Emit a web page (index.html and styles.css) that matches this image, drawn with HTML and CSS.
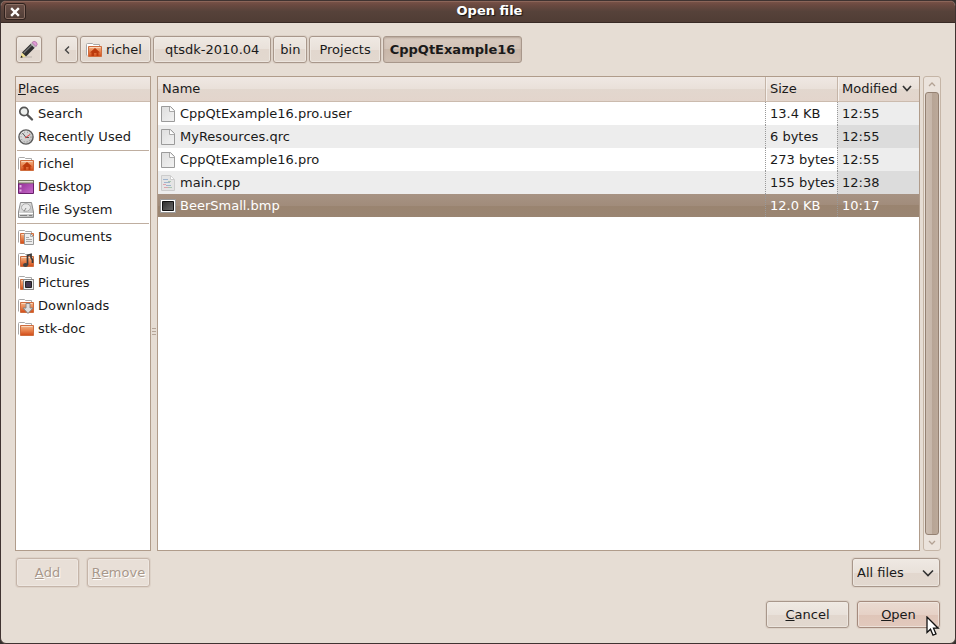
FILE: index.html
```html
<!DOCTYPE html>
<html lang="en">
<head>
<meta charset="utf-8">
<title>Open file</title>
<link rel="stylesheet" href="styles.css">
</head>
<body>
<svg class="defs" width="0" height="0" aria-hidden="true">
  <defs>
    <linearGradient id="orange" x1="0" y1="0" x2="0" y2="1"><stop offset="0" stop-color="#f3b98d"/><stop offset=".5" stop-color="#e8824d"/><stop offset="1" stop-color="#d14a17"/></linearGradient>
    <linearGradient id="paper" x1="0" y1="0" x2="1" y2="1"><stop offset="0" stop-color="#dedede"/><stop offset="1" stop-color="#f2f2f2"/></linearGradient>
    <linearGradient id="purple" x1="0" y1="0" x2="1" y2="1"><stop offset="0" stop-color="#8c278f"/><stop offset="1" stop-color="#c86ccb"/></linearGradient>
    <linearGradient id="dark" x1="0" y1="0" x2="1" y2="1"><stop offset="0" stop-color="#2c2c2c"/><stop offset="1" stop-color="#6a6a6a"/></linearGradient>
    <linearGradient id="metal" x1="0" y1="0" x2="1" y2="1"><stop offset="0" stop-color="#ececec"/><stop offset="1" stop-color="#b9b9b9"/></linearGradient>
    <symbol id="folder" viewBox="0 0 16 16">
      <path d="M.5 13.500V2.500Q.5 1.500 1.500 1.500H6.500L7.500 2.500H13.500V4.500" fill="#fff" stroke="#a9a9a9"/>
      <path d="M2.500 4.500H15.500V14.500H2.500Z" fill="url(#orange)" stroke="#cf6d3e"/>
      <path d="M3.500 5.500H14.500" stroke="#f9d6bc"/>
    </symbol>
    <symbol id="home" viewBox="0 0 16 16">
      <use href="#folder"/>
      <path d="M4 10.500L9 6L14 10.500H12.500V14H10.500V11H8V14H5.500V10.500Z" fill="#bb3a0d"/>
    </symbol>
    <symbol id="file" viewBox="0 0 16 16">
      <path d="M1.500 .5H10.500L14.500 4.500V15.500H1.500Z" fill="url(#paper)" stroke="#9b9b9b"/>
      <path d="M9.500 1V5.500H14" fill="#fff" stroke="#aaa"/>
    </symbol>
  </defs>
</svg>
<div class="window">
  <header class="titlebar">
    <button class="close" type="button" aria-label="Close"><svg width="10" height="10" viewBox="0 0 10 10"><path d="M2 2L8 8M8 2L2 8" stroke="#fff" stroke-width="2.400" stroke-linecap="square"/></svg></button>
    <h1>Open file</h1>
  </header>
  <main class="content">
    <nav class="path" aria-label="Path">
      <button class="btn edit" type="button" aria-label="Type a file name"><svg width="20" height="20" viewBox="0 0 20 20"><path d="M4 17H13" stroke="#cfc5bd" stroke-width="2"/><path d="M1.500 18L3 12.500L7 16.500Z" fill="#efe08e"/><path d="M1.500 18L2.300 15.500L4 17.200Z" fill="#222"/><path d="M3 12.500L12 3.500L16 7.500L7 16.500Z" fill="#2e2e2e"/><path d="M4.800 13L13.200 4.800" stroke="#777" stroke-width="1.200"/><path d="M11.500 4L13.500 2L17.500 6L15.500 8Z" fill="#bcbcbc"/><path d="M13 2.500Q15 .3 17.300 2.200Q19.300 4.300 17 6.500Z" fill="#df9bd5" stroke="#a96b9f" stroke-width=".7"/></svg></button>
      <button class="btn back" type="button" aria-label="Scroll back"><svg width="6" height="10" viewBox="0 0 6 10"><path d="M5 1.500L1.500 5L5 8.500" fill="none" stroke="#444" stroke-width="1.400"/></svg></button>
      <button class="btn crumb home" type="button"><svg class="icon"><use href="#home"/></svg>richel</button>
      <button class="btn crumb wide" type="button">qtsdk-2010.04</button>
      <button class="btn crumb" type="button">bin</button>
      <button class="btn crumb mid" type="button">Projects</button>
      <button class="btn crumb current" type="button" aria-pressed="true">CppQtExample16</button>
    </nav>
    <div class="panes">
      <section class="places">
        <h2><u>P</u>laces</h2>
        <ul>
          <li><svg class="icon" viewBox="0 0 16 16"><circle cx="6" cy="5.500" r="4.200" fill="#eef0ee" stroke="#555" stroke-width="1.700"/><path d="M9.500 9L14 13.500" stroke="#555" stroke-width="2.400" stroke-linecap="round"/></svg>Search</li>
          <li><svg class="icon" viewBox="0 0 16 16"><circle cx="8" cy="8" r="7.100" fill="url(#metal)" stroke="#5c5c5c" stroke-width="1.400"/><circle cx="8" cy="8" r="5" fill="none" stroke="#888" stroke-dasharray="1 2"/><path d="M4.500 4L8 8.500H11" fill="none" stroke="#555"/><path d="M7 9L12 5.500" stroke="#e44"/></svg>Recently Used</li>
        </ul>
        <ul>
          <li><svg class="icon"><use href="#home"/></svg>richel</li>
          <li><svg class="icon" viewBox="0 0 16 16"><path d="M.5 1.500H15.500V14.500H.5Z" fill="url(#purple)" stroke="#69206c"/><path d="M.5 1.500H15.500V4H.5Z" fill="#dfdfd0" stroke="#777960"/><path d="M1.500 6H3.500V8.500H1.500ZM1.500 10.500H3.500V12.500H1.500Z" fill="#e2b3e4"/></svg>Desktop</li>
          <li><svg class="icon" viewBox="0 0 16 16"><path d="M2.500 .5H13.500L15.500 10V15.500H.5V10Z" fill="url(#metal)" stroke="#8c8c8c"/><ellipse cx="8" cy="5.500" rx="4.500" ry="3.800" fill="#e8e8e8" stroke="#aaa"/><path d="M8 6L6 9.500" stroke="#888"/><path d="M1 11.500H15" stroke="#fff"/><path d="M2 13.500H9M11 13.500H14" stroke="#808080"/></svg>File System</li>
        </ul>
        <ul>
          <li><svg class="icon" viewBox="0 0 16 16"><use href="#folder"/><path d="M6.500 4.500H12.500L15.500 7.500V15.500H6.500Z" fill="#eee" stroke="#999"/><path d="M12.500 4.500V7.500H15.500M8 8.500H11M8 10.500H14M8 12.500H14" fill="none" stroke="#aaa"/></svg>Documents</li>
          <li><svg class="icon" viewBox="0 0 16 16"><use href="#folder"/><path d="M9.500 13V3.500L13 2.500V5.500L14.500 8V11" fill="none" stroke="#3a3a3a" stroke-width="1.700"/><ellipse cx="7.500" cy="13" rx="2.500" ry="2" fill="#444"/></svg>Music</li>
          <li><svg class="icon" viewBox="0 0 16 16"><use href="#folder"/><path d="M5.500 4.500H15.500V14.500H5.500Z" fill="#eee" stroke="#888"/><path d="M7.500 6.500H13.500V12.500H7.500Z" fill="#43364f" stroke="#222"/></svg>Pictures</li>
          <li><svg class="icon" viewBox="0 0 16 16"><use href="#folder"/><path d="M8 5.500H12V10H15L10 15.500L5 10H8Z" fill="#ddd" stroke="#888"/></svg>Downloads</li>
          <li><svg class="icon"><use href="#folder"/></svg>stk-doc</li>
        </ul>
      </section>
      <div class="grip" role="separator" aria-orientation="vertical"><i></i><i></i><i></i></div>
      <section class="files">
        <table>
          <thead><tr><th class="name">Name</th><th class="size">Size</th><th class="date">Modified<svg width="10" height="7" viewBox="0 0 10 7"><path d="M1 1L5 5.500L9 1" fill="none" stroke="#333" stroke-width="1.700"/></svg></th></tr></thead>
          <tbody>
            <tr><td><svg class="icon"><use href="#file"/></svg>CppQtExample16.pro.user</td><td>13.4 KB</td><td>12:55</td></tr>
            <tr><td><svg class="icon"><use href="#file"/></svg>MyResources.qrc</td><td>6 bytes</td><td>12:55</td></tr>
            <tr><td><svg class="icon"><use href="#file"/></svg>CppQtExample16.pro</td><td>273 bytes</td><td>12:55</td></tr>
            <tr><td><svg class="icon" viewBox="0 0 16 16"><path d="M1.500 .5H10.500L14.500 4.500V15.500H1.500Z" fill="#e4e4e4" stroke="#ccc"/><path d="M10.500 1V4.500H14" fill="#fff" stroke="#ccc"/><path d="M3 4.500H8M4 7.500H10M6 10.500H11" stroke="#9fb4cd"/><path d="M3 9.500H6M4 12.500H8" stroke="#dba4ae"/><path d="M8 12.500H12M8 6.500H11" stroke="#a9c5b0"/></svg>main.cpp</td><td>155 bytes</td><td>12:38</td></tr>
            <tr class="selected" aria-selected="true"><td><svg class="icon" viewBox="0 0 16 16"><path d="M.5 1.500H15.500V14.500H.5Z" fill="#fff" stroke="#999"/><path d="M2.500 3.500H13.500V12.500H2.500Z" fill="url(#dark)" stroke="#111"/></svg>BeerSmall.bmp</td><td>12.0 KB</td><td>10:17</td></tr>
          </tbody>
        </table>
      </section>
      <div class="scrollbar">
        <button type="button" aria-label="Scroll up"><svg width="8" height="5" viewBox="0 0 8 5"><path d="M1 4L4 1L7 4" fill="none" stroke="#b3a294" stroke-width="1.300"/></svg></button>
        <div class="thumb"></div>
        <button type="button" aria-label="Scroll down"><svg width="8" height="5" viewBox="0 0 8 5"><path d="M1 1L4 4L7 1" fill="none" stroke="#b3a294" stroke-width="1.300"/></svg></button>
      </div>
    </div>
    <div class="tools">
      <button class="btn" type="button" disabled><u>A</u>dd</button>
      <button class="btn" type="button" disabled><u>R</u>emove</button>
      <div class="filter">
        <select class="btn" aria-label="File type"><option>All files</option></select>
        <svg width="12" height="8" viewBox="0 0 12 8"><path d="M1 1.500L6 6.500L11 1.500" fill="none" stroke="#333" stroke-width="1.600"/></svg>
      </div>
    </div>
    <footer class="actions">
      <button class="btn" type="button"><u>C</u>ancel</button>
      <button class="btn open" type="button"><u>O</u>pen</button>
    </footer>
  </main>
  <svg class="cursor" width="14" height="21" viewBox="0 0 14 21" aria-hidden="true"><path d="M1 1V16.500L4.500 13.200L7 19.200L10 18L7.500 12.200H12.200Z" fill="#fff" stroke="#111" stroke-width="1.300"/></svg>
</div>
</body>
</html>
```
FILE: styles.css
```css
* { box-sizing: border-box; }
html { background: #35302d; }
body {
  margin: 0;
  font-family: "DejaVu Sans", sans-serif;
  font-size: 13px;
  line-height: 22px;
  color: #1a1a1a;
}
h1, h2, ul { margin: 0; padding: 0; }
ul { list-style: none; }
button, select { font: inherit; color: inherit; margin: 0; }
.defs { position: absolute; }
.icon { width: 16px; height: 16px; flex: none; }

.window {
  position: relative;
  display: flex;
  flex-direction: column;
  height: 100vh;
  overflow: hidden;
  border: 1px solid #403331;
  border-radius: 6px;
  background: #e6ddd4;
}
.titlebar {
  display: flex;
  flex: none;
  align-items: center;
  height: 22px;
  background: linear-gradient(#7a5348, #6a4940 20%, #56423a 50%, #503d35);
  border-bottom: 1px solid #382a25;
  box-shadow: inset 0 1px #8b6559;
}
.titlebar h1 {
  flex: 1;
  padding: 0 2px 2px 0;
  text-align: center;
  font-size: 13px;
  line-height: 18px;
  color: #fff;
  text-shadow: 1px 1px 1px #111;
}
.close {
  display: flex;
  align-items: center;
  justify-content: center;
  width: 22px;
  height: 17px;
  margin-left: 3px;
  padding: 0;
  border: 1px solid #2e211d;
  border-radius: 3px;
  background: linear-gradient(#6b5048, #4e3c35);
  box-shadow: inset 0 0 0 1px #8a6e63;
}

.content {
  display: flex;
  flex: 1;
  flex-direction: column;
  min-height: 0;
  padding: 13px 14px 15px;
}
.btn {
  display: flex;
  align-items: center;
  justify-content: center;
  height: 27px;
  padding: 0 8px;
  border: 1px solid #a8978b;
  border-radius: 3px;
  background: linear-gradient(#efe9e3, #e9e1da 50%, #e2d7ce 50%, #e2d8cf);
  box-shadow: inset 0 0 0 1px #f2ece6aa, 0 0 0 1px #ddd2c8;
}
.path { display: flex; gap: 2px; padding-left: 1px; }
.path .edit { width: 26px; padding: 0; }
.path .back { width: 22px; padding: 0; margin-left: 12px; }
.crumb { padding: 0 6px; }
.path .home { padding: 0 8px 0 5px; gap: 4px; }
.path .wide { padding: 0 11px; }
.path .mid { padding: 0 9px; }
.path .current {
  padding: 0 6px;
  font-weight: bold;
  background: linear-gradient(#d9cbc0, #d2c3b7 50%, #c9b7a9 50%, #cfbfb2);
  box-shadow: inset 0 1px 2px #b5a497;
}

.panes { display: flex; flex: 1; min-height: 0; margin-top: 13px; }
.places, .files { border: 1px solid #b09c8b; background: #fff; }
.places { flex: none; width: 136px; }
.places h2, th {
  height: 25px;
  font-size: 13px;
  font-weight: normal;
  text-align: left;
  background: linear-gradient(#efe8e3, #e9e0d9 50%, #e2d7ce 50%, #e3d5cc);
  border-bottom: 1px solid #cbbbae;
}
.places h2 { padding-left: 2px; line-height: 24px; }
.places li { display: flex; align-items: center; gap: 4px; padding-left: 2px; height: 23px; }
.places ul + ul { margin: 0 1px; padding-top: 1px; border-top: 1px solid #bfaea0; }
.places ul + ul li { padding-left: 1px; }
.places ul:not(:last-child) { margin-bottom: 2px; }
.grip { display: flex; flex-direction: column; justify-content: center; gap: 2px; width: 6px; padding: 36px 1px 0; }
.grip i { height: 1px; background: #b5a598; }
.files { flex: 1; min-width: 0; }
table { width: 100%; border-collapse: separate; border-spacing: 0; table-layout: fixed; }
th { padding: 0 4px; }
.size { width: 72px; }
.date { width: 82px; white-space: nowrap; }
.date svg { margin: 0 0 1px 5px; }
th + th { border-left: 1px solid #c5b5a8; box-shadow: inset 1px 0 #f5f0ec; }
td { height: 23px; padding: 0 0 0 4px; line-height: 22px; white-space: nowrap; }
td:first-child { padding-left: 2px; }
td + td { border-left: 1px dotted #999; }
td .icon { margin-right: 4px; vertical-align: -4px; }
tbody tr:nth-child(even) td { background: #ededed; }
tbody td:last-child { background: #ededed; }
tbody tr:nth-child(even) td:last-child { background: #dcdcdc; }
tbody tr.selected td { color: #fff; background: linear-gradient(#a79383, #a18c7b 50%, #9a8470 50%, #9a8572); }

.scrollbar {
  display: flex;
  flex-direction: column;
  width: 18px;
  margin-left: 3px;
  border: 1px solid #c5b5a6;
  border-radius: 3px;
  background: #ebe3dc;
}
.scrollbar button { display: flex; align-items: center; justify-content: center; height: 15px; padding: 0; border: 0; background: none; }
.thumb {
  flex: 1;
  margin: 0 1px;
  border: 1px solid #948172;
  border-radius: 3px;
  background: linear-gradient(90deg, #cdbeb2, #c6b6a9 50%, #b7a495 50%, #bba999);
}

.tools, .actions { display: flex; gap: 8px; padding: 0 1px; }
.tools { margin-top: 7px; }
.tools .btn { width: 63px; height: 29px; padding: 0 4px; }
.btn:disabled { color: #a8988b; border-color: #c5b5a9; background: #e8dfd7; text-shadow: 1px 1px #fff; }
.filter { position: relative; width: 88px; margin-left: auto; }
.filter select.btn { width: 100%; appearance: none; }
.filter svg { position: absolute; right: 6px; top: 11px; pointer-events: none; }
.actions { justify-content: flex-end; margin-top: 14px; }
.actions .btn { width: 83px; }
.actions .open { border-color: #a58b7e; background: linear-gradient(#eadbd2, #e6d1c6 50%, #dfc5b8 50%, #e2c9bd); }
.cursor { position: absolute; right: 15px; bottom: 6px; }
```
